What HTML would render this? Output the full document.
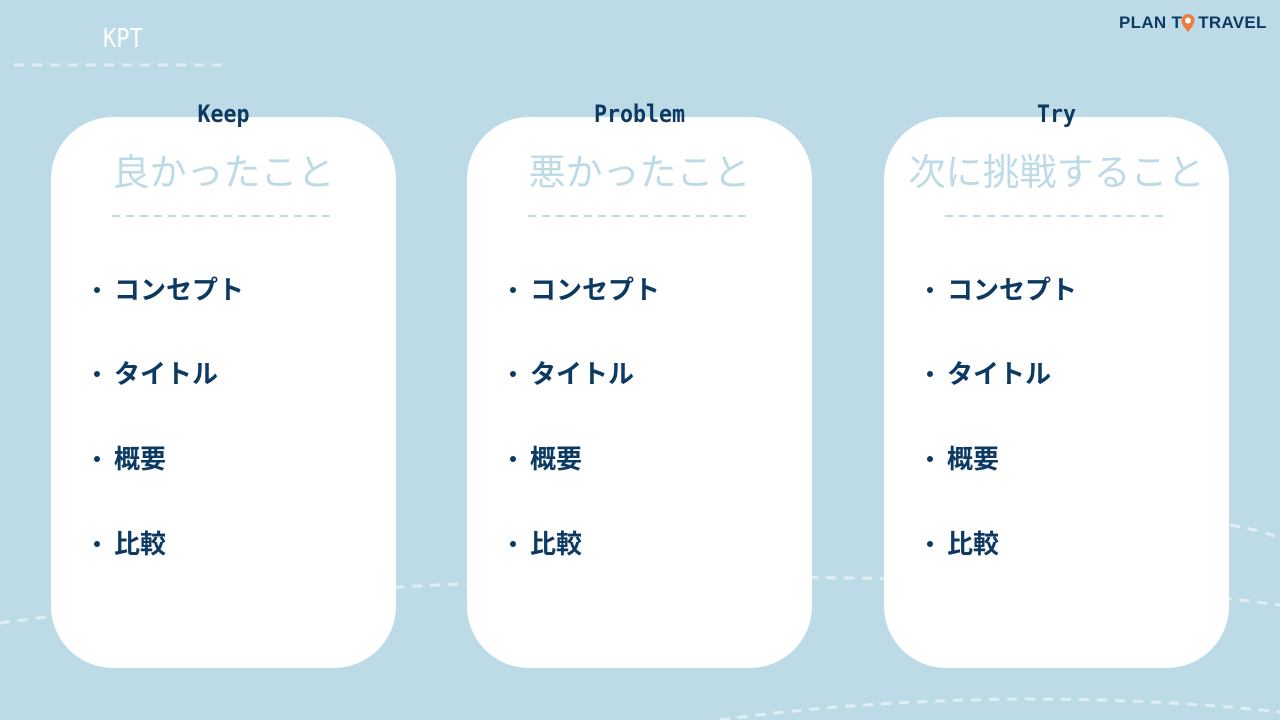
<!DOCTYPE html>
<html><head><meta charset="utf-8"><style>
body{margin:0;width:1280px;height:720px;overflow:hidden;background:#bddbe7;position:relative;font-family:"Liberation Sans","Noto Sans CJK JP",sans-serif}
.abs{position:absolute}
.card{position:absolute;top:117px;width:345px;height:551px;background:#fff;border-radius:62px}
.h{position:absolute;top:100px;width:345px;text-align:center;font-family:"DejaVu Sans Mono","Liberation Mono",monospace;font-weight:bold;font-size:24px;color:#0d3a63;transform:scaleX(0.9)}
.t{position:absolute;top:142px;width:345px;text-align:center;font-size:37px;color:#bddbe7;font-family:"Noto Sans CJK JP",sans-serif;white-space:nowrap}
.li{position:absolute;font-size:26px;font-weight:bold;color:#0d3a63;font-family:"Noto Sans CJK JP",sans-serif;white-space:nowrap}
.li:before{content:"";position:absolute;left:-20px;top:17px;width:6px;height:6px;border-radius:50%;background:#0d3a63}
</style></head><body>
<svg class="abs" style="left:0;top:0" width="1280" height="720">
<g fill="none" stroke="#e8f3f8" stroke-width="3" stroke-dasharray="10 8" opacity="0.8">
<path d="M0 623 Q300 582 700 578 Q1050 574 1280 605"/>
<path d="M1230 525 Q1260 530 1280 538"/>
<path d="M720 720 Q900 695 1100 700 Q1200 703 1280 712"/>
<path d="M14 65 H230"/>
</g></svg>
<div class="abs" style="left:103px;top:24px;color:#fff;font-size:26px;font-family:'DejaVu Sans Mono',monospace;transform:scaleX(0.85);transform-origin:left">KPT</div>
<div class="abs" style="left:1119px;top:13px;color:#0d3a63;font-size:17px;font-weight:bold;letter-spacing:0.3px">PLAN T<span style="display:inline-block;width:16px"></span>TRAVEL</div>
<svg class="abs" style="left:1180px;top:13px" width="16" height="20"><path d="M8 1a6.5 6.5 0 0 1 6.5 6.5C14.5 12 8 19 8 19S1.5 12 1.5 7.5A6.5 6.5 0 0 1 8 1z" fill="#f07a3a"/><circle cx="8" cy="7.5" r="3" fill="#fff"/></svg>

<div class="card" style="left:51px"></div>
<div class="card" style="left:467px"></div>
<div class="card" style="left:884px"></div>

<svg class="abs" style="left:0;top:0" width="1280" height="720">
<g stroke="#bddbe7" stroke-width="2" stroke-dasharray="8 6">
<path d="M112 216 H330"/><path d="M528 216 H746"/><path d="M945 216 H1163"/>
</g></svg>

<div class="h" style="left:51px">Keep</div>
<div class="h" style="left:467px">Problem</div>
<div class="h" style="left:884px">Try</div>
<div class="t" style="left:51px">良かったこと</div>
<div class="t" style="left:467px">悪かったこと</div>
<div class="t" style="left:884px">次に挑戦すること</div>

<div class="li" style="left:114px;top:270px">コンセプト</div>
<div class="li" style="left:114px;top:354px">タイトル</div>
<div class="li" style="left:114px;top:439px">概要</div>
<div class="li" style="left:114px;top:524px">比較</div>
<div class="li" style="left:530px;top:270px">コンセプト</div>
<div class="li" style="left:530px;top:354px">タイトル</div>
<div class="li" style="left:530px;top:439px">概要</div>
<div class="li" style="left:530px;top:524px">比較</div>
<div class="li" style="left:947px;top:270px">コンセプト</div>
<div class="li" style="left:947px;top:354px">タイトル</div>
<div class="li" style="left:947px;top:439px">概要</div>
<div class="li" style="left:947px;top:524px">比較</div>
</body></html>
